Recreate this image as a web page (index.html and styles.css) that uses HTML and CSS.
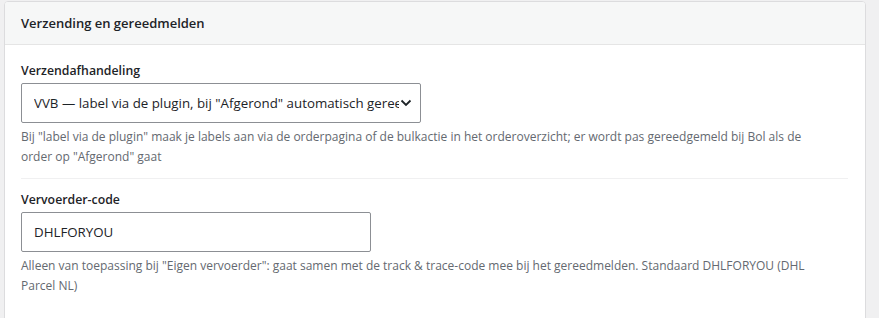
FILE: index.html
```
<!DOCTYPE html>
<html lang="nl">
<head>
<meta charset="utf-8">
<title>Verzending en gereedmelden</title>
<link rel="stylesheet" href="styles.css">
</head>
<body>
<section class="card">
  <header class="card-header">
    <h2 class="card-title">Verzending en gereedmelden</h2>
  </header>
  <div class="card-body">
    <div class="field">
      <label class="field-label" for="afh">Verzendafhandeling</label>
      <div class="select">
        <span class="select-value">VVB — label via de plugin, bij "Afgerond" automatisch gereedmelden</span>
        <svg class="chevron" width="12" height="8" viewBox="0 0 12 8"><path d="M1.5 1.5 L6 6 L10.5 1.5" fill="none" stroke="#1d2327" stroke-width="1.8"/></svg>
      </div>
      <p class="help">Bij "label via de plugin" maak je labels aan via de orderpagina of de bulkactie in het orderoverzicht; er wordt pas gereedgemeld bij Bol als de<br>order op "Afgerond" gaat</p>
    </div>
    <hr class="sep">
    <div class="field">
      <label class="field-label" for="code">Vervoerder-code</label>
      <div class="input"><span>DHLFORYOU</span></div>
      <p class="help">Alleen van toepassing bij "Eigen vervoerder": gaat samen met de track &amp; trace-code mee bij het gereedmelden. Standaard DHLFORYOU (DHL<br>Parcel NL)</p>
    </div>
  </div>
</section>
</body>
</html>
```
FILE: styles.css
```
html, body {
  margin: 0;
  padding: 0;
}
body {
  background: #f0f0f1;
  font-family: "Open Sans", "Noto Sans", sans-serif;
  color: #1d2327;
  font-size: 12px;
  height: 318px;
  overflow: hidden;
}
.card {
  margin: 1px 0 0 4px;
  width: 862px;
  background: #fff;
  border: 1px solid #dcdcde;
  border-radius: 4px;
  min-height: 330px;
  box-sizing: border-box;
  overflow: hidden;
}
.card-header {
  height: 42px;
  background: #f6f7f7;
  border-bottom: 1px solid #e5e5e5;
  display: flex;
  align-items: center;
  padding: 0 16px;
}
.card-title {
  margin: 0;
  font-size: 13px;
  font-weight: 600;
  color: #1d2327;
}
.card-body {
  padding: 16px 16px 0 16px;
}
.field-label {
  display: block;
  font-size: 12.3px;
  font-weight: 600;
  line-height: 20px;
  margin-bottom: 2px;
  color: #1d2327;
}
.select, .input {
  box-sizing: border-box;
  height: 40px;
  border: 1px solid #8c8f94;
  border-radius: 2px;
  display: flex;
  align-items: center;
  padding: 0 12px;
  font-size: 13.3px;
  color: #1d2327;
  background: #fff;
}
.select {
  width: 400px;
  padding-right: 8px;
}
.input {
  width: 350px;
}
.select-value {
  flex: 1;
  white-space: nowrap;
  overflow: hidden;
  min-width: 0;
}
.chevron {
  flex: none;
  margin-left: 1px;
}
.help {
  margin: 4px 0 0 0;
  color: #646970;
  font-size: 12px;
  line-height: 20px;
  white-space: nowrap;
}
.sep {
  border: 0;
  border-top: 1px solid #f0f0f1;
  margin: 11px 0 11px 0;
  width: 827px;
}
```
